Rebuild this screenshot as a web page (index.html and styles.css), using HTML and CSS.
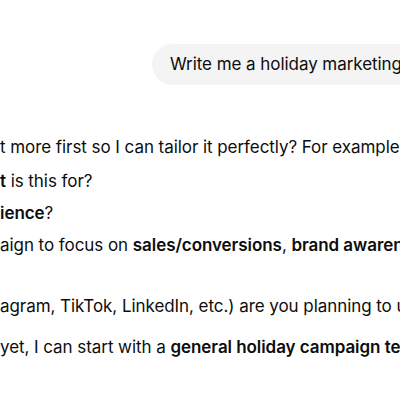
FILE: index.html
```html
<!DOCTYPE html>
<html lang="en">
<head>
<meta charset="utf-8">
<title>Chat</title>
<link rel="stylesheet" href="styles.css">
</head>
<body>
<main class="chat">
  <div class="user-row">
    <div class="bubble">Write me a holiday marketing campaign</div>
  </div>
  <div class="reply">
    <p class="lead">t more first so I can tailor it perfectly? For example:</p>
    <ol class="questions">
      <li><b>t</b> is this for?</li>
      <li><b>ience</b>?</li>
      <li>aign to focus on <b>sales/conversions</b>, <b>brand awareness</b>, or <b>engagement</b>?</li>
      <li><span class="blank"></span><span class="line">agram, TikTok, LinkedIn, etc.) are you planning to use?</span></li>
    </ol>
    <p class="closing">yet, I can start with a <b>general holiday campaign template</b> you can adapt.</p>
  </div>
</main>
</body>
</html>
```

FILE: styles.css
```css
* { box-sizing: border-box; }
html, body { margin: 0; padding: 0; background: #ffffff; }
body {
  width: 400px;
  height: 400px;
  overflow: hidden;
  font-family: Inter, "Noto Sans", "Liberation Sans", sans-serif;
  font-size: 17px;
  letter-spacing: -0.06px;
  color: #0d0d0d;
}
.chat {
  width: 900px;
  padding-top: 44px;
}
.user-row {
  display: flex;
  padding-left: 152px;
}
.bubble {
  background: #f4f4f4;
  border-radius: 21px;
  padding: 9px 20px 9px 18px;
  line-height: 23px;
  white-space: nowrap;
}
.reply {
  margin-top: 48px;
  white-space: nowrap;
  line-height: 28px;
}
.reply p { margin: 0; }
.reply b { font-weight: 600; }
.questions {
  list-style: none;
  margin: 6px 0 0;
  padding: 0;
}
.questions li { margin-top: 4px; }
.questions li:first-child { margin-top: 0; }
.blank, .line { display: block; height: 28px; }
.line { margin-top: 1px; }
.closing { margin-top: 13px !important; }
```
